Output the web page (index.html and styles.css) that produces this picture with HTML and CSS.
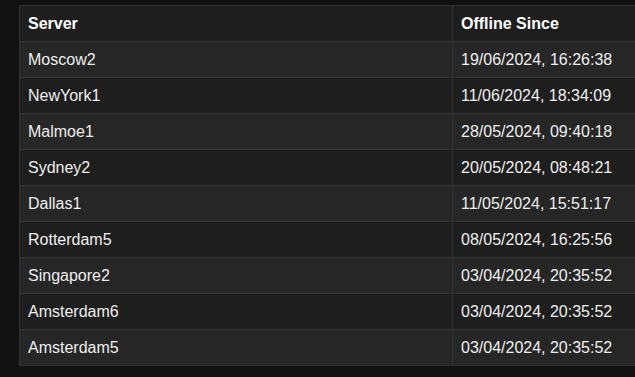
FILE: index.html
```html
<!DOCTYPE html>
<html>
<head>
<meta charset="utf-8">
<link rel="stylesheet" href="styles.css">
</head>
<body>
<div class="wrap">
<table class="grid">
  <colgroup><col class="c1"><col class="c2"></colgroup>
  <thead>
    <tr><th>Server</th><th>Offline Since</th></tr>
  </thead>
  <tbody>
    <tr><td>Moscow2</td><td>19/06/2024, 16:26:38</td></tr>
    <tr><td>NewYork1</td><td>11/06/2024, 18:34:09</td></tr>
    <tr><td>Malmoe1</td><td>28/05/2024, 09:40:18</td></tr>
    <tr><td>Sydney2</td><td>20/05/2024, 08:48:21</td></tr>
    <tr><td>Dallas1</td><td>11/05/2024, 15:51:17</td></tr>
    <tr><td>Rotterdam5</td><td>08/05/2024, 16:25:56</td></tr>
    <tr><td>Singapore2</td><td>03/04/2024, 20:35:52</td></tr>
    <tr><td>Amsterdam6</td><td>03/04/2024, 20:35:52</td></tr>
    <tr><td>Amsterdam5</td><td>03/04/2024, 20:35:52</td></tr>
  </tbody>
</table>
</div>
</body>
</html>
```

FILE: styles.css
```css
html, body {
  margin: 0;
  padding: 0;
  background: #111111;
  overflow: hidden;
  width: 635px;
  height: 377px;
}
.wrap {
  box-sizing: border-box;
  width: 635px;
  height: 377px;
  padding: 5px 0 0 19px;
  overflow: hidden;
}
.grid {
  border-collapse: separate;
  border-spacing: 0;
  table-layout: fixed;
  width: 617px;
  border-top: 1px solid #333333;
  border-left: 1px solid #333333;
  font-family: "Liberation Sans", Arial, sans-serif;
  font-size: 16px;
  line-height: 19px;
  color: #eeeeee;
}
.c1 { width: 433px; }
.c2 { width: 183px; }
.grid th, .grid td {
  box-sizing: border-box;
  padding: 8px 8px;
  text-align: left;
  border-bottom: 1px solid #333333;
  white-space: nowrap;
}
.grid th:first-child, .grid td:first-child {
  border-right: 1px solid #333333;
}
.grid th {
  font-weight: bold;
  background: #1e1e1e;
  color: #ffffff;
}
.grid tbody tr:nth-child(odd) td { background: #262626; }
.grid tbody tr:nth-child(even) td { background: #1e1e1e; }
```
